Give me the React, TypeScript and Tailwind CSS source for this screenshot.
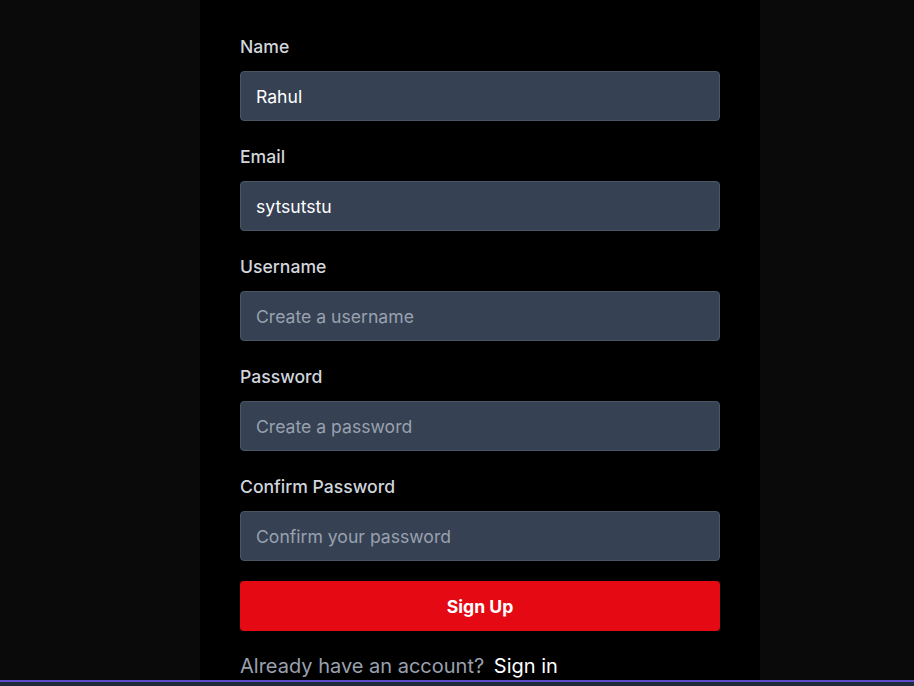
import React from "react";

const fields = [
  { label: "Name", value: "Rahul", placeholder: "Enter your name", type: "text" },
  { label: "Email", value: "sytsutstu", placeholder: "Enter your email", type: "text" },
  { label: "Username", value: "", placeholder: "Create a username", type: "text" },
  { label: "Password", value: "", placeholder: "Create a password", type: "password" },
  { label: "Confirm Password", value: "", placeholder: "Confirm your password", type: "password" },
];

export default function App() {
  return (
    <div
      className="flex h-[686px] flex-col overflow-hidden bg-[#0a0a0a]"
      style={{ fontFamily: "Inter, 'Noto Sans', sans-serif" }}
    >
      <main className="flex flex-1 overflow-hidden pl-[200px]">
        <div className="w-[560px] bg-black px-10 pt-[35px]">
          <form className="flex flex-col" onSubmit={(e) => e.preventDefault()}>
            <div className="flex flex-col gap-6">
              {fields.map((f) => (
                <div key={f.label} className="flex flex-col">
                  <label className="mb-3 text-[17.6px] font-medium leading-6 text-gray-300">
                    {f.label}
                  </label>
                  <input
                    type={f.type}
                    defaultValue={f.value}
                    placeholder={f.placeholder}
                    className="h-[50px] rounded border border-gray-600 bg-gray-700 px-[15px] text-[17.6px] text-white placeholder-gray-400 outline-none"
                  />
                </div>
              ))}
            </div>
            <button
              type="submit"
              className="mt-5 h-[50px] rounded bg-[#e50914] pt-0.5 text-[17.6px] font-bold text-white"
            >
              Sign Up
            </button>
            <p className="mt-[21px] text-xl leading-7 text-gray-400">
              Already have an account?{" "}
              <a href="#" className="ml-1 text-white">
                Sign in
              </a>
            </p>
          </form>
        </div>
      </main>
      <div className="h-[6px] shrink-0 border-t-2 border-[#5a4bc8] bg-gray-800" />
    </div>
  );
}
